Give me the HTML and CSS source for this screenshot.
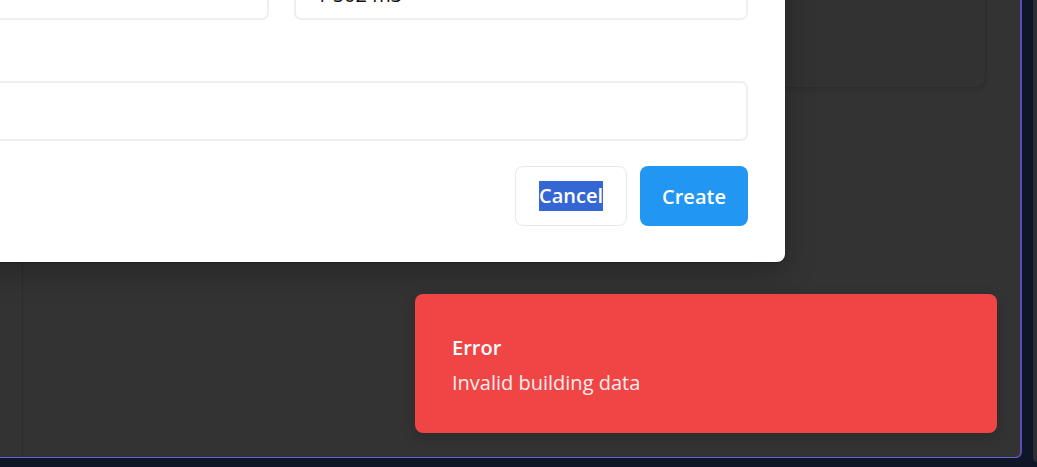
FILE: index.html
```html
<!DOCTYPE html>
<html lang="en">
<head>
<meta charset="utf-8">
<title>Buildings</title>
<link rel="stylesheet" href="styles.css">
</head>
<body>
  <div class="app">
    <aside class="sidebar"></aside>
    <main class="main">
      <section class="card"></section>
    </main>

    <div class="modal">
      <div class="row">
        <div class="field"><div class="input"></div></div>
        <div class="field"><div class="input">1 502 m3</div></div>
      </div>
      <div class="field wide">
        <div class="label"></div>
        <div class="input"></div>
      </div>
      <div class="actions">
        <button class="btn btn-outline"><span class="selected">Cancel</span></button>
        <button class="btn btn-primary">Create</button>
      </div>
    </div>

    <div class="toast">
      <div class="toast-title">Error</div>
      <div class="toast-desc">Invalid building data</div>
    </div>
  </div>
  <div class="strip"></div>
</body>
</html>
```

FILE: styles.css
```css
* { box-sizing: border-box; }

html, body {
  margin: 0;
  height: 100%;
}

body {
  background: #0f1628;
  font-family: "Open Sans", "Noto Sans", sans-serif;
  overflow: hidden;
  display: flex;
  align-items: flex-start;
}

.app {
  position: relative;
  width: 1022px;
  height: 458px;
  background: #333333;
  border-right: 2px solid #5a4cbc;
  border-bottom: 1px solid #6a5fd4;
  border-bottom-right-radius: 6px;
  display: flex;
  overflow: hidden;
  flex-shrink: 0;
}

.strip {
  width: 4px;
  height: 462px;
  margin-left: 11px;
  background: #2e2e2e;
  border-bottom-left-radius: 6px;
}

.sidebar {
  width: 23px;
  border-right: 1px solid #2c2c2c;
  flex-shrink: 0;
}

.main {
  flex: 1;
  padding: 0 34px 0 0;
  display: flex;
  flex-direction: column;
  align-items: flex-end;
}

.card {
  width: 700px;
  height: 108px;
  margin-top: -20px;
  background: #323232;
  border: 1px solid #2d2d2d;
  border-radius: 10px;
  box-shadow: 0 2px 4px rgba(0, 0, 0, 0.12);
}

/* modal */
.modal {
  position: absolute;
  left: -222px;
  top: -77px;
  width: 1007px;
  background: #ffffff;
  border-radius: 8px;
  padding: 37px 37px 36px;
  box-shadow: 0 1px 1px rgba(0, 0, 0, 0.25), 0 10px 30px rgba(0, 0, 0, 0.25);
}

.row {
  display: grid;
  grid-template-columns: 1fr 1fr;
  gap: 25px;
}

.field.wide {
  margin-top: 20px;
  display: flex;
  flex-direction: column;
  gap: 13px;
}

.label {
  height: 28px;
}

.input {
  height: 60px;
  border: 2px solid #efefef;
  border-radius: 7px;
  padding: 5px 20px 0;
  font-size: 20px;
  line-height: 56px;
  color: #111;
  overflow: hidden;
}

.actions {
  margin-top: 25px;
  display: flex;
  justify-content: flex-end;
  gap: 13px;
}

.btn {
  height: 60px;
  border-radius: 8px;
  font-family: "Open Sans", "Noto Sans", sans-serif;
  font-size: 20px;
  font-weight: 600;
  display: flex;
  align-items: center;
  justify-content: center;
}

.btn-outline {
  width: 112px;
  background: #ffffff;
  border: 1px solid #e8e8e8;
  color: #222;
}

.selected {
  background: #3567d4;
  color: #ffffff;
  line-height: 30px;
  display: inline-block;
}

.btn-primary {
  width: 108px;
  background: #2196f3;
  border: none;
  color: #ffffff;
}

/* toast */
.toast {
  position: absolute;
  left: 415px;
  top: 294px;
  width: 582px;
  height: 139px;
  background: #ef4545;
  border-radius: 8px;
  padding: 40px 37px 36px;
  color: #ffffff;
  box-shadow: 0 4px 14px rgba(0, 0, 0, 0.18);
}

.toast-title {
  font-size: 20px;
  line-height: 28px;
  font-weight: 600;
}

.toast-desc {
  margin-top: 7px;
  font-size: 20px;
  line-height: 28px;
  opacity: 0.9;
}
```
